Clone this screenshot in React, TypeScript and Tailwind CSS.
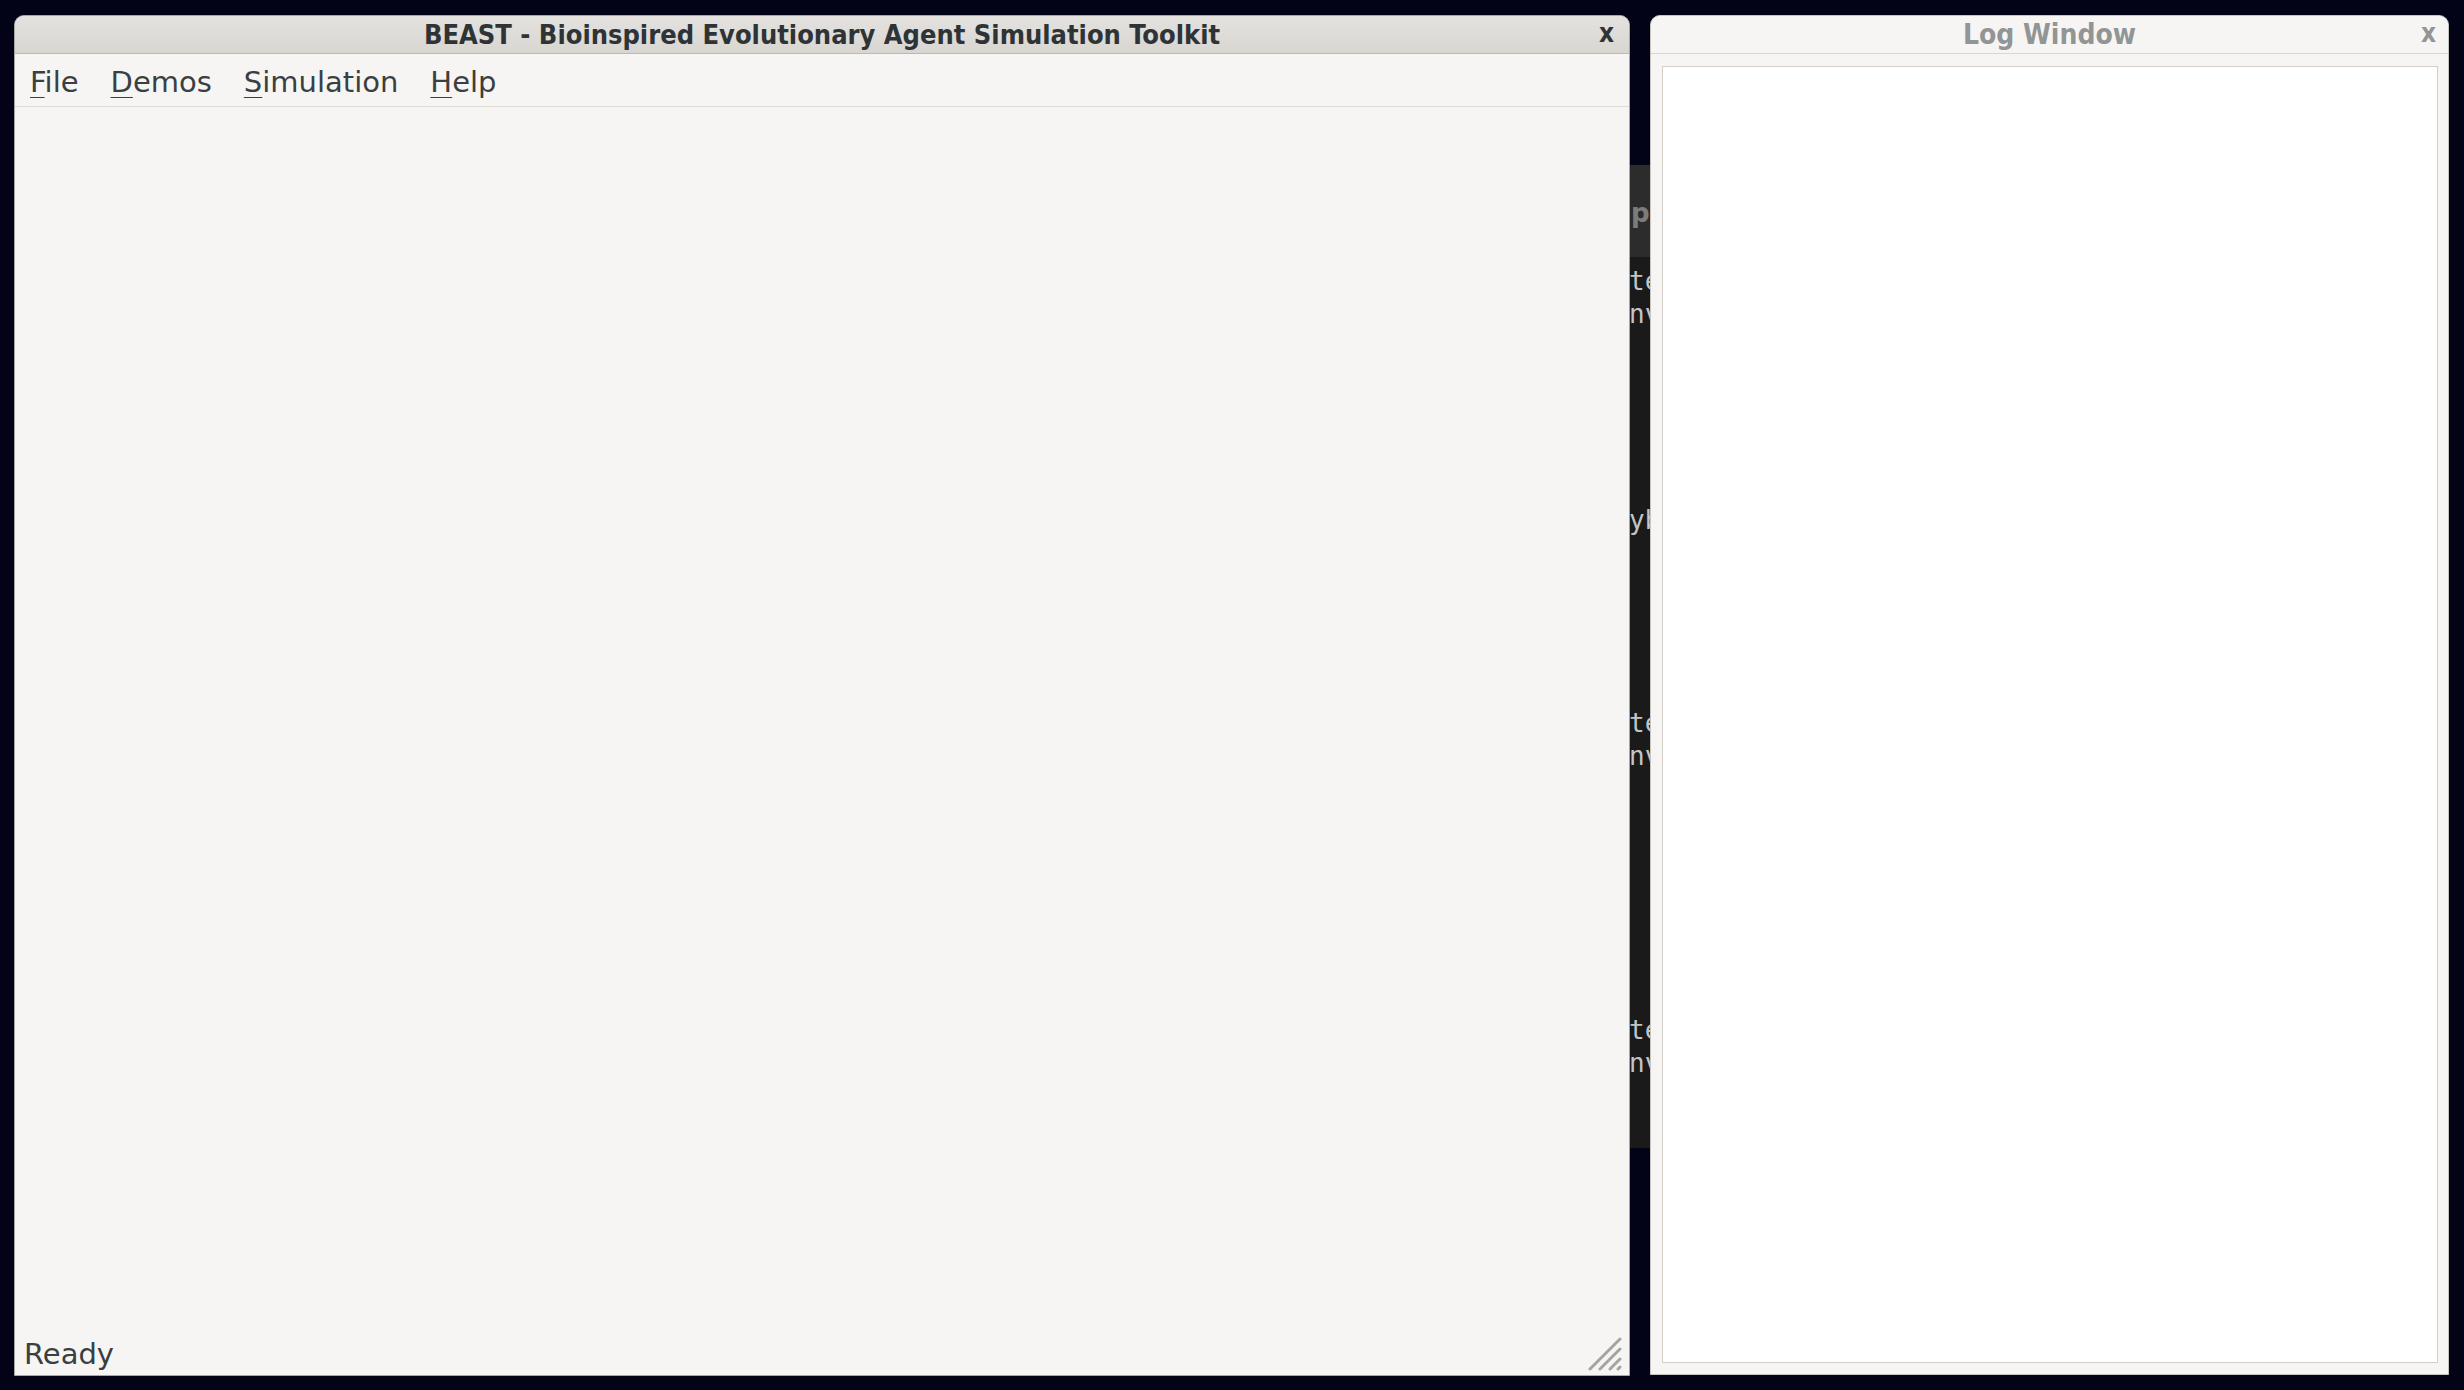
import React from "react";

const frag = [
  { top: 265, text: "te" },
  { top: 298, text: "nv" },
  { top: 504, text: "yb" },
  { top: 707, text: "te" },
  { top: 740, text: "nv" },
  { top: 1014, text: "te" },
  { top: 1047, text: "nv" },
];

function Mn({ c, rest }: { c: string; rest: string }) {
  return (
    <span>
      <span className="underline decoration-1 underline-offset-[5px]">{c}</span>
      {rest}
    </span>
  );
}

export default function App() {
  return (
    <div className="relative w-[2464px] h-[1390px] overflow-hidden bg-[#030318] font-['DejaVu_Sans',sans-serif]">
      {/* background terminal window */}
      <div className="absolute left-[1200px] top-[165px] w-[450px] h-[983px] bg-[#1a1a1a] overflow-hidden">
        <div className="h-[92px] bg-[#2c2c2c] relative">
          <span className="absolute left-[431px] top-[32px] text-[26px] leading-[32px] font-bold text-[#7c7c7c] font-['DejaVu_Sans',sans-serif]">p</span>
        </div>
        {frag.map((f, i) => (
          <span
            key={i}
            className="absolute left-[429px] text-[26px] leading-[32px] text-[#c4c4c4] font-['DejaVu_Sans_Mono',monospace]"
            style={{ top: f.top - 165 }}
          >
            {f.text}
          </span>
        ))}
      </div>

      {/* main window */}
      <div className="absolute left-[14px] top-[15px] w-[1616px] h-[1361px] flex flex-col bg-[#f6f5f4] rounded-t-[10px] overflow-hidden border border-[#a8a6a3]">
        <div className="relative h-[38px] shrink-0 flex items-center justify-center bg-gradient-to-b from-[#e4e2df] to-[#d9d6d2] border-b border-[#bdb8b3]">
          <span className="text-[27px] font-bold font-stretch-condensed text-[#2e3436] font-['DejaVu_Sans_Condensed','DejaVu_Sans',sans-serif] leading-none">
            BEAST - Bioinspired Evolutionary Agent Simulation Toolkit
          </span>
          <span className="absolute right-[15px] top-[3px] text-[26px] font-bold text-[#2e3436] font-['DejaVu_Sans_Condensed','DejaVu_Sans',sans-serif] leading-[28px]">
            x
          </span>
        </div>
        <div className="h-[53px] shrink-0 flex items-center gap-[32px] pl-[15px] pt-[5px] border-b border-[#e0ddd9] text-[29px] text-[#3a3f41]">
          <Mn c="F" rest="ile" />
          <Mn c="D" rest="emos" />
          <Mn c="S" rest="imulation" />
          <Mn c="H" rest="elp" />
        </div>
        <div className="flex-1" />
        <div className="relative h-[42px] shrink-0 flex items-center pl-[9px] text-[29px] text-[#3a3f41]">
          <span className="leading-none">Ready</span>
          <svg className="absolute right-[7px] bottom-[4px]" width="36" height="36" viewBox="0 0 36 36">
            <g stroke="#a5a4a1" strokeWidth="3" strokeLinecap="round">
              <line x1="34" y1="4" x2="4" y2="34" />
              <line x1="34" y1="14" x2="14" y2="34" />
              <line x1="34" y1="24" x2="24" y2="34" />
              <line x1="34" y1="32" x2="32" y2="34" />
            </g>
          </svg>
        </div>
      </div>

      {/* log window */}
      <div className="absolute left-[1650px] top-[15px] w-[799px] h-[1360px] flex flex-col bg-[#f6f5f4] rounded-t-[10px] overflow-hidden border border-[#c8c5c1]">
        <div className="relative h-[38px] shrink-0 flex items-center justify-center bg-[#f6f5f4] border-b border-[#d9d6d2]">
          <span className="text-[28px] font-bold font-stretch-condensed text-[#929595] font-['DejaVu_Sans_Condensed','DejaVu_Sans',sans-serif] leading-none">
            Log Window
          </span>
          <span className="absolute right-[12px] top-[3px] text-[26px] font-bold text-[#929595] font-['DejaVu_Sans_Condensed','DejaVu_Sans',sans-serif] leading-[28px]">
            x
          </span>
        </div>
        <div className="flex-1 flex pt-[12px] pl-[11px] pr-[10px] pb-[11px]">
          <div className="flex-1 bg-white border border-[#d3ceca]" />
        </div>
      </div>
    </div>
  );
}
